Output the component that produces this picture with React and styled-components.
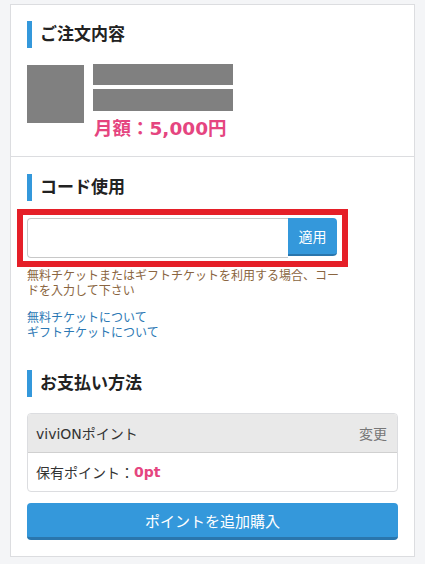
import React from "react";
import styled, { createGlobalStyle } from "styled-components";

const GlobalStyle = createGlobalStyle`
  html, body {
    margin: 0;
    padding: 0;
    background: #f4f5f7;
  }
  body {
    font-family: "DejaVu Sans", "Noto Sans CJK JP", sans-serif;
    color: #333;
  }
  * {
    box-sizing: border-box;
  }
`;

const App = () => {
  return (
    <>
      <GlobalStyle />
      <Card>
        <Section $pad="16px 16px 15px" $divider>
          <Heading $mb={16}>ご注文内容</Heading>
          <Item>
            <Thumb />
            <ItemInfo>
              <Bar $h={21} />
              <Bar $h={22} />
              <Price>月額：5,000円</Price>
            </ItemInfo>
          </Item>
        </Section>

        <Section $pad="17px 16px 0">
          <Heading $mb={8}>コード使用</Heading>
          <Highlight>
            <CodeGroup>
              <CodeInput type="text" />
              <ApplyButton type="button">適用</ApplyButton>
            </CodeGroup>
          </Highlight>
          <Note>
            無料チケットまたはギフトチケットを利用する場合、コードを入力して下さい
          </Note>
          <Links>
            <LinkText href="#">無料チケットについて</LinkText>
            <LinkText href="#">ギフトチケットについて</LinkText>
          </Links>
        </Section>

        <Section $pad="30px 16px 16px">
          <Heading $mb={16}>お支払い方法</Heading>
          <Panel>
            <PanelHead>
              <span>viviONポイント</span>
              <Change>変更</Change>
            </PanelHead>
            <PanelBody>
              保有ポイント：<Points>0pt</Points>
            </PanelBody>
          </Panel>
          <BuyButton type="button">ポイントを追加購入</BuyButton>
        </Section>
      </Card>
    </>
  );
};

export default App;

const Card = styled.div`
  margin: 4px 10px 0;
  background: #fff;
  border: 1px solid #dcdde0;
`;

const Section = styled.section`
  padding: ${p => p.$pad};
  border-bottom: ${p => (p.$divider ? "1px solid #dcdde0" : "none")};
`;

const Heading = styled.h2`
  margin: 0 0 ${p => p.$mb}px;
  padding-left: 8px;
  border-left: 5px solid #3498db;
  font-size: 17px;
  line-height: 27px;
  font-weight: bold;
  color: #222;
`;

const Item = styled.div`
  display: flex;
  align-items: flex-start;
  gap: 9px;
`;

const Thumb = styled.div`
  width: 57px;
  height: 58px;
  margin-top: 1px;
  background: #808080;
`;

const ItemInfo = styled.div`
  display: flex;
  flex-direction: column;
  gap: 4px;
`;

const Bar = styled.div`
  width: 140px;
  height: ${p => p.$h}px;
  background: #808080;
`;

const Price = styled.div`
  margin-top: 2px;
  padding-left: 1px;
  font-size: 18.5px;
  line-height: 24px;
  font-weight: bold;
  color: #e5457f;
`;

const Highlight = styled.div`
  width: 331px;
  margin-left: -10px;
  padding: 3px 5px 3px 4px;
  border: 6px solid #e51f28;
`;

const CodeGroup = styled.div`
  display: flex;
  height: 40px;
`;

const CodeInput = styled.input`
  flex: 1;
  min-width: 0;
  height: 40px;
  border: 1px solid #c8c8c8;
  border-right: none;
  border-radius: 4px 0 0 4px;
  background: #fff;
  outline: none;
`;

const ApplyButton = styled.button`
  width: 49px;
  height: 38px;
  padding: 0;
  border: none;
  border-bottom: 2px solid #2a76ad;
  border-radius: 0 4px 4px 0;
  background: #3498db;
  color: #fff;
  font-family: "DejaVu Sans", "Noto Sans CJK JP", sans-serif;
  font-size: 14px;
`;

const Note = styled.p`
  width: 322px;
  margin: 2px 0 0;
  font-size: 12px;
  line-height: 15px;
  color: #8a6540;
`;

const Links = styled.div`
  display: flex;
  flex-direction: column;
  margin-top: 12px;
`;

const LinkText = styled.a`
  font-size: 12px;
  line-height: 14.5px;
  color: #2b78b4;
  text-decoration: none;
`;

const Panel = styled.div`
  border: 1px solid #dcdde0;
  border-radius: 4px;
  overflow: hidden;
`;

const PanelHead = styled.div`
  display: flex;
  justify-content: space-between;
  align-items: center;
  height: 39px;
  padding: 0 10px 0 8px;
  background: #e9e9e9;
  border-bottom: 1px solid #d0d0d0;
  font-size: 14px;
  color: #333;
`;

const Change = styled.span`
  color: #777;
`;

const PanelBody = styled.div`
  display: flex;
  align-items: center;
  height: 38px;
  padding: 0 8px;
  font-size: 14px;
  color: #333;
`;

const Points = styled.span`
  font-weight: bold;
  color: #e5457f;
`;

const BuyButton = styled.button`
  display: block;
  width: 100%;
  height: 37px;
  margin-top: 11px;
  padding: 0;
  border: none;
  border-bottom: 3px solid #2a76ad;
  border-radius: 4px;
  background: #3498db;
  color: #fff;
  font-family: "DejaVu Sans", "Noto Sans CJK JP", sans-serif;
  font-size: 15px;
`;
